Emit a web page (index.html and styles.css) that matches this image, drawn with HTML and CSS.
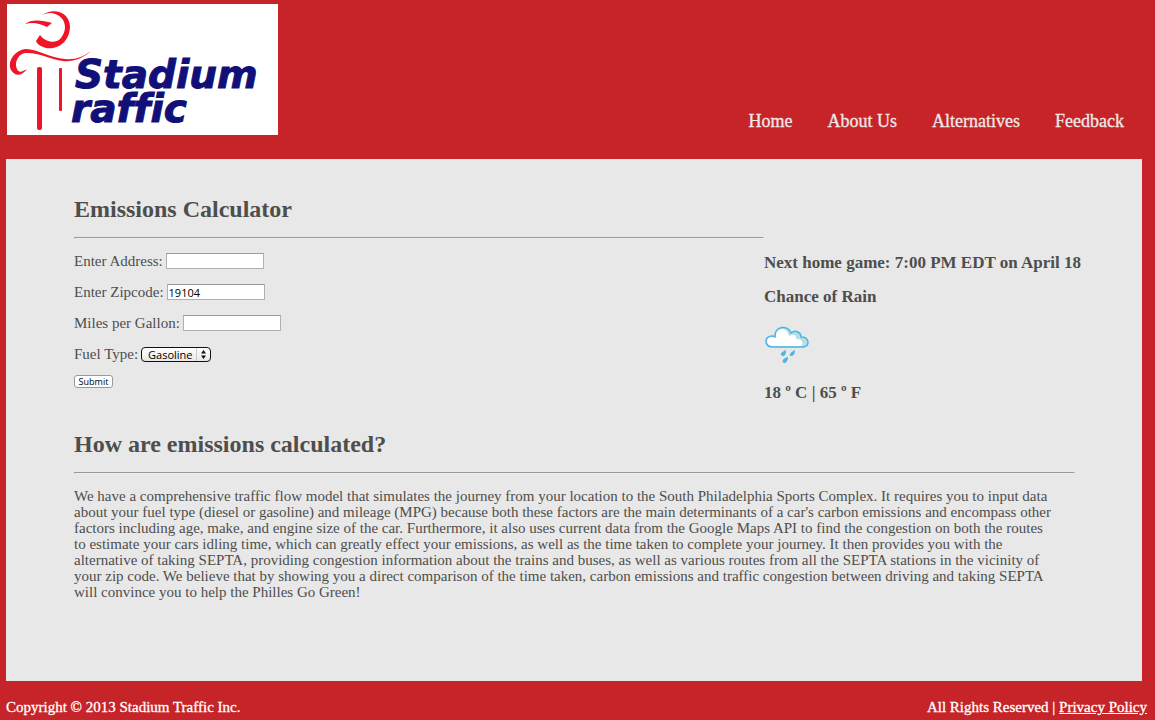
FILE: index.html
```html
<!DOCTYPE html>
<html lang="en">
<head>
<meta charset="utf-8">
<title>Stadium Traffic</title>
<link rel="stylesheet" href="styles.css">
</head>
<body>
<header class="header">
  <a class="logo" href="#" aria-label="Stadium Traffic">
    <svg width="271" height="131" viewBox="7 4 271 131" role="img">
      <g fill="#f01428">
        <path d="M42 15C54 7 69 12 70 26C70 40 60 50 46 48C40 46 37 44 36 41L40 35C45 42 55 44 60 39C69 30 66 14 50 13C47 13 45 14 42 15Z"/>
        <path d="M25 24C31 19 42 20 52 23L47 27C39 23 32 22 25 24Z"/>
        <path d="M91 51C82 59 73 62 63 61C49 59 38 52 25 53C18 54 14 63 17 69C19 74 23 71 27 69C22 76 15 77 11 70C7 61 15 50 26 49C38 49 50 58 65 59C75 60 83 57 91 51Z"/>
        <rect x="37" y="67" width="5" height="63" rx="2"/>
        <rect x="59" y="68" width="3" height="43" rx="1"/>
      </g>
      <text class="logo-text" x="75" y="88">Stadium</text>
      <text class="logo-text" x="71" y="122">raffic</text>
    </svg>
  </a>
  <nav class="nav">
    <a href="#">Home</a>
    <a href="#">About Us</a>
    <a href="#">Alternatives</a>
    <a href="#">Feedback</a>
  </nav>
</header>
<main class="main">
  <div class="top">
    <section class="calculator">
      <h2>Emissions Calculator</h2>
      <hr>
      <form class="form">
        <div class="field"><label for="address">Enter Address:</label><input id="address" type="text"></div>
        <div class="field"><label for="zip">Enter Zipcode:</label><input id="zip" type="text" value="19104"></div>
        <div class="field"><label for="mpg">Miles per Gallon:</label><input id="mpg" type="text"></div>
        <div class="field"><label for="fuel">Fuel Type:</label>
          <span class="select-wrap">
            <select id="fuel"><option>Gasoline</option><option>Diesel</option></select>
            <svg class="arrows" width="14" height="13" viewBox="0 0 14 13" aria-hidden="true"><path d="M0 0h1v13h-1z" fill="#ccc"/><path d="M5 5.5L7.5 2L10 5.5ZM5 7.5L7.5 11L10 7.5Z" fill="#111"/></svg>
          </span>
        </div>
        <button class="submit" type="button">Submit</button>
      </form>
    </section>
    <aside class="game">
      <h4>Next home game: 7:00 PM EDT on April 18</h4>
      <h4>Chance of Rain</h4>
      <svg class="weather" width="46" height="42" viewBox="0 0 46 42" role="img" aria-label="Rain">
        <path d="M8 22C0 21 0 11 8 11C10 11 10 11 11 12C10 0 25 0 27 8C32 4 37 8 37 12C46 12 46 22 39 22Z" fill="#b5dfe5" stroke="#4ab5e2" stroke-width="1.5"/>
        <path d="M8 21C1 20 2 12 8 12L12 13C11 2 23 1 25 11C30 8 33 11 32 14C39 13 40 20 37 21Z" fill="#fff"/>
        <path d="M22 25C22 29 21 31 19 31C15 30 17 27 22 25ZM31 25C31 29 29 31 27 31C24 30 27 27 31 25ZM24 32C24 36 22 38 20 38C17 37 19 33 24 32Z" fill="#4ab5e2"/>
      </svg>
      <h4>18 º C | 65 º F</h4>
    </aside>
  </div>
  <section class="explain">
    <h2>How are emissions calculated?</h2>
    <hr>
    <p>We have a comprehensive traffic flow model that simulates the journey from your location to the South Philadelphia Sports Complex. It requires you to input data about your fuel type (diesel or gasoline) and mileage (MPG) because both these factors are the main determinants of a car's carbon emissions and encompass other factors including age, make, and engine size of the car. Furthermore, it also uses current data from the Google Maps API to find the congestion on both the routes to estimate your cars idling time, which can greatly effect your emissions, as well as the time taken to complete your journey. It then provides you with the alternative of taking SEPTA, providing congestion information about the trains and buses, as well as various routes from all the SEPTA stations in the vicinity of your zip code. We believe that by showing you a direct comparison of the time taken, carbon emissions and traffic congestion between driving and taking SEPTA will convince you to help the Philles Go Green!</p>
  </section>
</main>
<footer class="footer">
  <span>Copyright © 2013 Stadium Traffic Inc.</span>
  <span>All Rights Reserved | <a href="#">Privacy Policy</a></span>
</footer>
</body>
</html>
```
FILE: styles.css
```css
* { box-sizing: border-box; }
body {
  margin: 0;
  padding: 4px 8px 0 6px;
  background: #c62428;
  color: #4e4e4c;
  font: 15px/16px Georgia, "Liberation Serif", serif;
}
.header {
  display: flex;
  justify-content: space-between;
  align-items: flex-end;
  padding: 0 23px 24px 1px;
}
.logo { display: block; background: #fff; }
.logo svg { display: block; }
.logo-text {
  font: italic bold 39px "DejaVu Sans", sans-serif;
  font-variant-ligatures: none;
  fill: #101078;
  stroke: #101078;
  stroke-width: 1px;
}
.nav { display: flex; gap: 35px; padding-bottom: 4px; }
.nav a {
  color: #f0e8e8;
  font-size: 18px;
  line-height: 20px;
  text-decoration: none;
  -webkit-text-stroke: 0.3px;
}
.main {
  margin-right: 5px;
  padding: 38px 67px 81px 68px;
  background: #e8e8e8;
}
.top { display: flex; }
.calculator { flex: 1; }
h2 { margin: 0; font-size: 24px; line-height: 24px; }
hr {
  height: 2px;
  margin: 16px 0 14px;
  border: 1px solid;
  border-color: #999 #eee #eee #999;
}
.form { display: flex; flex-direction: column; align-items: flex-start; }
.field { display: flex; align-items: center; gap: 3px; height: 16px; margin-bottom: 15px; }
.field input {
  width: 98px;
  height: 16px;
  padding: 0 1px;
  border: 1px solid #b0b0b0;
  border-top-color: #999;
  background: #fff;
  color: #000;
  font: 11px "Open Sans", sans-serif;
}
.select-wrap { position: relative; display: flex; }
.select-wrap select {
  appearance: none;
  width: 70px;
  height: 15px;
  padding: 0 0 0 6px;
  border: 1px solid #111;
  border-radius: 4px;
  background: linear-gradient(#fff, #e8e8e8);
  color: #000;
  font: 11px/13px "Open Sans", sans-serif;
}
.arrows { position: absolute; top: 1px; right: 1px; pointer-events: none; }
.submit {
  width: 39px;
  height: 13px;
  margin-top: -2px;
  padding: 0;
  border: 1px solid #999;
  border-radius: 3px;
  background: #fff;
  color: #000;
  font: 9px/11px "Open Sans", sans-serif;
}
.game { flex: 0 0 311px; min-width: 0; padding-top: 58px; white-space: nowrap; }
h4 { margin: 0 0 18px; font-size: 17px; line-height: 16px; }
.weather { display: block; margin: 20px 0 18px; }
.explain { padding-top: 13px; }
.explain p { margin: 0; padding-right: 21px; }
.footer {
  display: flex;
  justify-content: space-between;
  padding: 18px 0 4px;
  color: #fff;
  -webkit-text-stroke: 0.3px;
}
.footer a { color: #fff; }
```
